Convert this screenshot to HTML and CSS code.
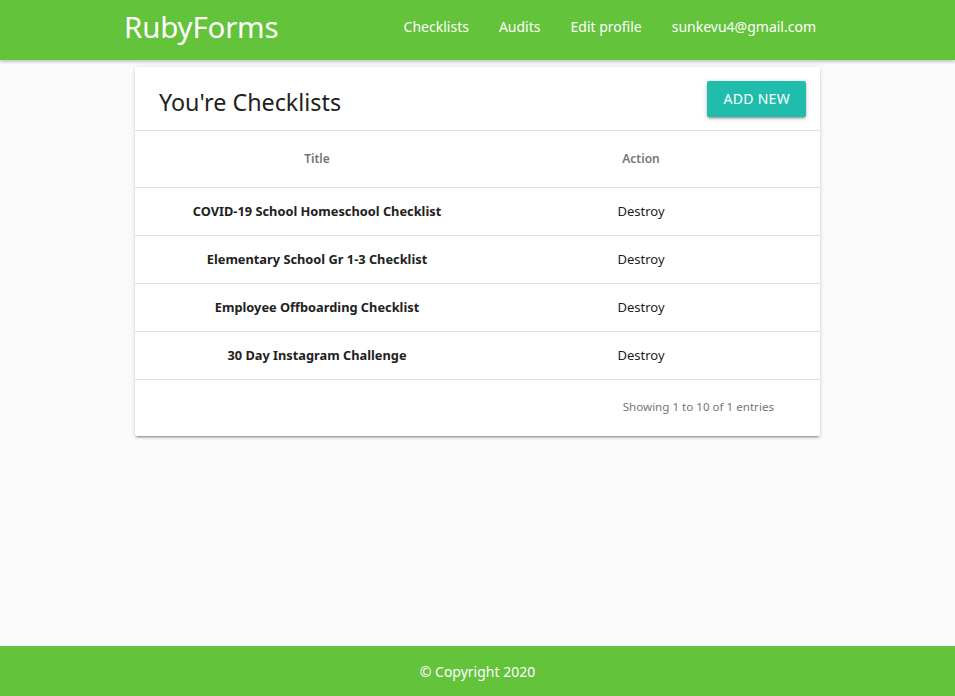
FILE: index.html
```html
<!DOCTYPE html>
<html>
<head>
<meta charset="utf-8">
<link rel="stylesheet" href="styles.css">
</head>
<body>
<nav class="navbar">
  <a class="brand" href="#">RubyForms</a>
  <ul class="nav-links">
    <li><a href="#">Checklists</a></li>
    <li><a href="#">Audits</a></li>
    <li><a href="#">Edit profile</a></li>
    <li><a href="#">sunkevu4@gmail.com</a></li>
  </ul>
</nav>
<main class="main">
  <section class="card">
    <div class="card-head">
      <h1 class="card-title">You're Checklists</h1>
      <a class="btn" href="#">ADD NEW</a>
    </div>
    <div class="table">
      <div class="row head"><div class="cell">Title</div><div class="cell">Action</div></div>
      <div class="row"><div class="cell title">COVID-19 School Homeschool Checklist</div><div class="cell">Destroy</div></div>
      <div class="row"><div class="cell title">Elementary School Gr 1-3 Checklist</div><div class="cell">Destroy</div></div>
      <div class="row"><div class="cell title">Employee Offboarding Checklist</div><div class="cell">Destroy</div></div>
      <div class="row"><div class="cell title">30 Day Instagram Challenge</div><div class="cell">Destroy</div></div>
    </div>
    <div class="card-foot">
      <span class="info">Showing 1 to 10 of 1 entries</span>
    </div>
  </section>
</main>
<footer class="footer">© Copyright 2020</footer>
</body>
</html>
```
FILE: styles.css
```css
* { box-sizing: border-box; }
html, body { height: 100%; }
body {
  margin: 0;
  font-family: "Noto Sans", "Open Sans", sans-serif;
  background: #fafafa;
  color: #212121;
  display: flex;
  flex-direction: column;
}
a { text-decoration: none; color: inherit; }
.navbar {
  height: 60px;
  flex-shrink: 0;
  background: #63c33a;
  display: flex;
  align-items: flex-start;
  justify-content: space-between;
  padding: 0 139px 0 124px;
  box-shadow: 0 2px 3px rgba(0,0,0,0.22);
  position: relative;
  z-index: 2;
}
.brand {
  color: #fff;
  font-size: 29.5px;
  letter-spacing: -0.2px;
  line-height: 54px;
}
.nav-links {
  list-style: none;
  margin: 0;
  padding: 0;
  display: flex;
  gap: 30px;
}
.nav-links a {
  color: #fff;
  font-size: 14px;
  line-height: 54px;
  display: block;
}
.main {
  flex: 1;
  display: flex;
  justify-content: center;
  padding-top: 7px;
}
.card {
  width: 685px;
  height: 369px;
  background: #fff;
  border-radius: 2px;
  box-shadow: 0 2px 2px rgba(0,0,0,0.14), 0 1px 5px rgba(0,0,0,0.12), 0 3px 1px -2px rgba(0,0,0,0.2);
  display: flex;
  flex-direction: column;
}
.card-head {
  height: 64px;
  border-bottom: 1px solid #e0e0e0;
  display: flex;
  align-items: flex-start;
  justify-content: space-between;
  padding: 14px 14px 0 24px;
}
.card-title {
  margin: 0;
  font-weight: 400;
  font-size: 23.3px;
  line-height: 42px;
  color: #212121;
}
.btn {
  background: #20bdad;
  color: #fff;
  font-size: 14px;
  height: 36px;
  line-height: 36px;
  padding: 0 16px;
  border-radius: 2px;
  box-shadow: 0 2px 2px rgba(0,0,0,0.14), 0 3px 1px -2px rgba(0,0,0,0.12), 0 1px 5px rgba(0,0,0,0.2);
  letter-spacing: 0.3px;
}
.table { display: flex; flex-direction: column; }
.row {
  display: grid;
  grid-template-columns: 364px 284px;
  height: 48px;
  align-items: center;
  border-bottom: 1px solid #e0e0e0;
  font-size: 13px;
  padding-bottom: 2px;
}
.row.head {
  height: 57px;
  color: #757575;
  font-weight: 600;
  font-size: 12px;
}
.cell { text-align: center; }
.cell.title { font-weight: 700; font-size: 12.8px; }
.card-foot {
  flex: 1;
  display: flex;
  justify-content: flex-end;
  align-items: center;
  padding: 0 46px 4px 0;
}
.info {
  color: #757575;
  font-size: 11.6px;
}
.footer {
  height: 50px;
  flex-shrink: 0;
  background: #63c33a;
  color: #fff;
  font-size: 14px;
  display: flex;
  align-items: center;
  justify-content: center;
}
```
